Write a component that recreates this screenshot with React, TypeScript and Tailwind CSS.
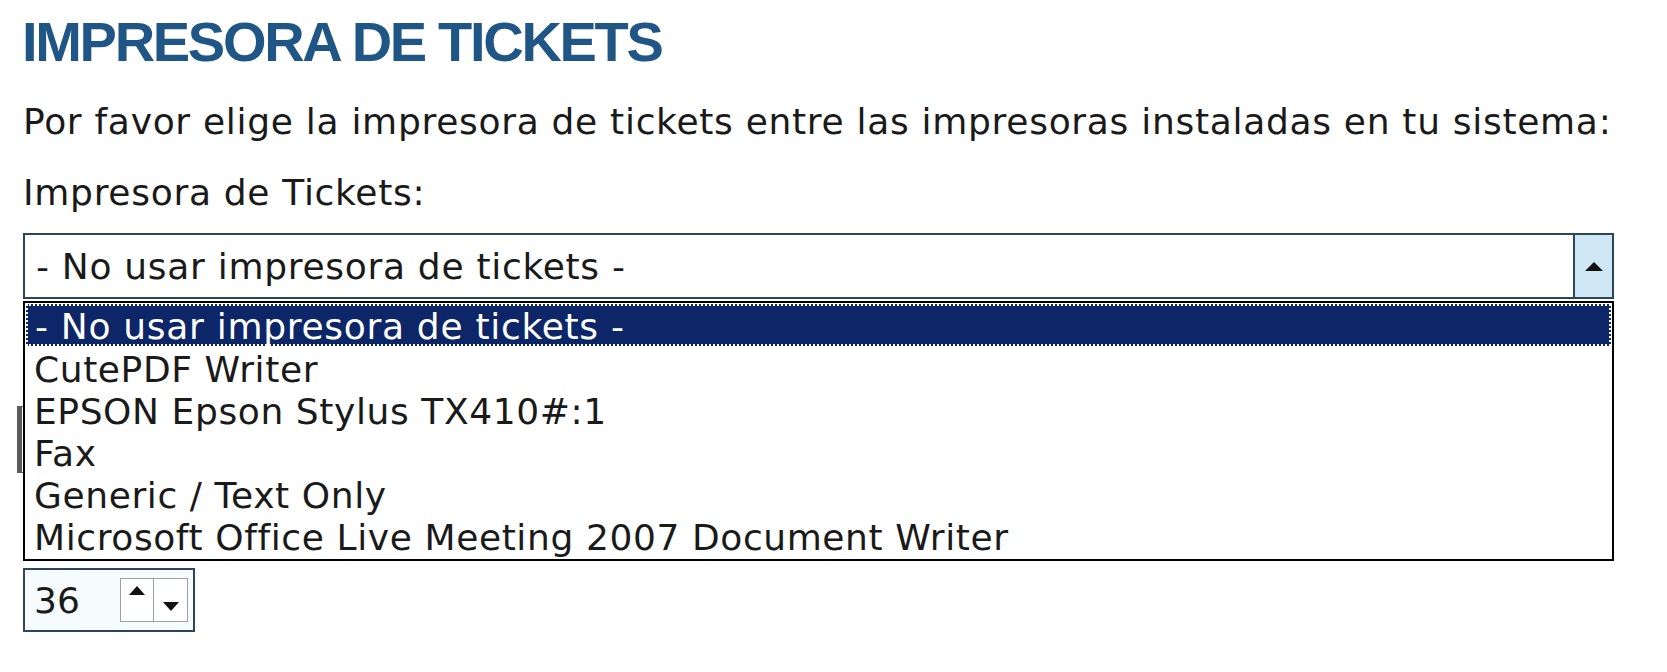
import React, { useState } from 'react';

const printers = [
  '- No usar impresora de tickets -',
  'CutePDF Writer',
  'EPSON Epson Stylus TX410#:1',
  'Fax',
  'Generic / Text Only',
  'Microsoft Office Live Meeting 2007 Document Writer',
];

const bodyFont = "font-['DejaVu_Sans',Verdana,sans-serif]";

const App: React.FC = () => {
  const [selected, setSelected] = useState(0);
  const [copies] = useState(36);

  return (
    <div className={`min-h-screen bg-white pl-[23px] pt-[9px] text-[#1a1a1a] ${bodyFont}`}>
      <h1 className="-ml-[1px] font-['Liberation_Sans',Arial,sans-serif] text-[56px] font-bold leading-[66px] tracking-[-2.3px] text-[#1f5686]">
        IMPRESORA DE TICKETS
      </h1>

      <p className="mt-[25px] text-[36px] leading-[44px] tracking-[0.7px]">
        Por favor elige la impresora de tickets entre las impresoras instaladas en tu sistema:
      </p>

      <label className="mt-[27px] block text-[36px] leading-[44px] tracking-[0.7px]">Impresora de Tickets:</label>

      <div className="mt-[18px] w-[1591px]">
        {/* printer select, opened */}
        <div className="relative">
          <div className="flex h-[66px] border-2 border-[#2b4659] bg-white">
            <div className="flex flex-1 items-center pl-[11px] pt-[2px] text-[36px] tracking-[0.7px]">{printers[selected]}</div>
            <div className="flex w-[39px] items-center justify-center border-l-2 border-[#2b4659] bg-[#cfe6f4]">
              <svg width="18" height="9" viewBox="0 0 18 9">
                <path d="M9 0 L18 9 L0 9 Z" fill="#111" />
              </svg>
            </div>
          </div>

          <ul className="absolute left-0 top-full z-10 mt-[2px] w-full border-2 border-black bg-white pb-[3px] pt-[1px]">
            {printers.map((p, i) => (
              <li
                key={p}
                onClick={() => setSelected(i)}
                className={
                  i === selected
                    ? 'mx-[1px] flex h-[42px] items-center border-2 border-dotted border-white bg-[#0c2668] pl-[7px] pt-[4px] text-[36px] tracking-[0.7px] text-white'
                    : 'flex h-[42px] items-center pl-[9px] pt-[6px] text-[36px] tracking-[0.6px]'
                }
              >
                {p}
              </li>
            ))}
          </ul>
        </div>

        {/* fields below, covered by the open list */}
        <div className="h-[269px] pt-[107px]">
          <div className="-ml-[6px] h-[67px] w-[420px] border border-l-[5px] border-[#5a5a5a] bg-white" />
        </div>
      </div>

      {/* copies spinner */}
      <div className="flex h-[64px] w-[172px] items-center border-2 border-[#2b4659] bg-[#f6fbfd] pl-[9px]">
        <span className="w-[86px] pt-[2px] text-[36px]">{copies}</span>
        <div className="flex h-[44px] border border-[#a0a0a0] bg-white">
          <div className="flex w-[33px] items-start justify-center border-r border-[#a0a0a0] pt-[7px]">
            <svg width="16" height="9" viewBox="0 0 16 9">
              <path d="M8 0 L16 9 L0 9 Z" fill="#111" />
            </svg>
          </div>
          <div className="flex w-[33px] items-end justify-center pb-[10px]">
            <svg width="16" height="9" viewBox="0 0 16 9">
              <path d="M0 0 L16 0 L8 9 Z" fill="#111" />
            </svg>
          </div>
        </div>
      </div>
    </div>
  );
};

export default App;
